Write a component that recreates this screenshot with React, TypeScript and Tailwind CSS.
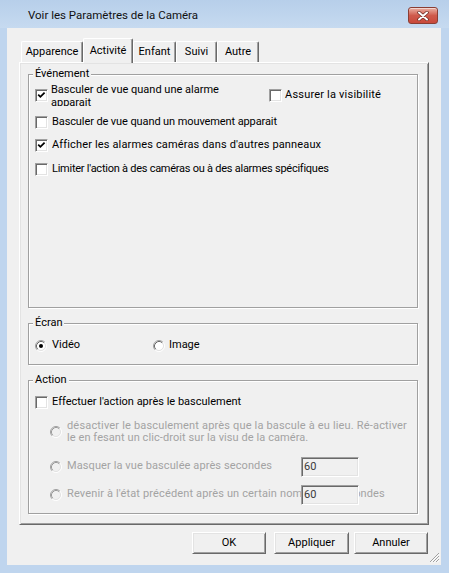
import React from "react";

function Check({ checked }: { checked?: boolean }) {
  return (
    <span className="relative block w-[13px] h-[13px] shrink-0 bg-white border border-t-[#a0a0a0] border-l-[#a0a0a0] border-r-white border-b-white shadow-[inset_1px_1px_0_#696969,inset_-1px_-1px_0_#e3e3e3]">
      {checked && (
        <svg className="absolute left-[1px] top-[1px]" width="9" height="9" viewBox="0 0 9 9">
          <path d="M1.2 3.6 L3.4 5.8 L7.6 1.6" stroke="#000" strokeWidth="1.8" fill="none" />
        </svg>
      )}
    </span>
  );
}

function Radio({ checked, disabled }: { checked?: boolean; disabled?: boolean }) {
  return (
    <svg width="12" height="12" viewBox="0 0 12 12" className="shrink-0 block">
      <path d="M2.11 9.89 A5.5 5.5 0 0 1 9.89 2.11" stroke="#a0a0a0" fill="none" />
      <path d="M9.89 2.11 A5.5 5.5 0 0 1 2.11 9.89" stroke="#ffffff" fill="none" />
      <circle cx="6" cy="6" r="4" fill={disabled ? "#f0f0f0" : "#ffffff"} />
      <path d="M2.82 9.18 A4.5 4.5 0 0 1 9.18 2.82" stroke={disabled ? "#9a9a9a" : "#696969"} fill="none" />
      <path d="M9.18 2.82 A4.5 4.5 0 0 1 2.82 9.18" stroke="#e3e3e3" fill="none" />
      {checked && <circle cx="6" cy="6" r="2" fill="#000" />}
    </svg>
  );
}

function TextBox({ value }: { value: string }) {
  return (
    <div className="relative z-10 w-[58px] h-[20px] shrink-0 bg-[#f0f0f0] border border-t-[#a0a0a0] border-l-[#a0a0a0] border-r-white border-b-white shadow-[inset_1px_1px_0_#696969,inset_-1px_-1px_0_#e3e3e3] flex items-center pl-[2px] text-[#3a3a3a] leading-[14px] tracking-normal">
      {value}
    </div>
  );
}

function Button({ label, w }: { label: string; w: string }) {
  return (
    <div
      className={`${w} h-[22px] bg-[#f0f0f0] border border-t-white border-l-white border-r-[#696969] border-b-[#696969] shadow-[inset_1px_1px_0_#e3e3e3,inset_-1px_-1px_0_#a0a0a0] flex items-center justify-center leading-[14px]`}
    >
      {label}
    </div>
  );
}

function Tab({ label, w, selected }: { label: string; w: string; selected?: boolean }) {
  return (
    <div
      className={`${w} ${
        selected ? "h-[25px] -mb-[1px] relative z-10 pb-[1px]" : "h-[21px]"
      } bg-[#f0f0f0] border-t border-l border-t-white border-l-white border-r border-r-[#696969] shadow-[inset_-1px_0_0_#a0a0a0] rounded-t-[2px] flex items-center justify-center leading-[14px]`}
    >
      {label}
    </div>
  );
}

const groupCls =
  "border border-[#a0a0a0] shadow-[1px_1px_0_#ffffff,inset_1px_1px_0_#ffffff] p-0 m-0 min-w-0";
const legendCls = "ml-[4px] px-[2px] leading-[14px] bg-[#f0f0f0]";

export default function App() {
  return (
    <div className="font-['Roboto',sans-serif] text-[11px] text-black w-[449px] h-[573px] bg-[#bfd5ee] flex flex-col overflow-hidden">
      {/* Title bar */}
      <div className="h-[28px] shrink-0 flex items-start bg-gradient-to-b from-[#b7cfea] to-[#c6daf0]">
        <span className="ml-[28px] mt-[6px] leading-[18px] text-[11.5px] text-[#111]">
          Voir les Paramètres de la Caméra
        </span>
        <div className="ml-auto mr-[11px] mt-[7px] w-[30px] h-[17px] rounded-[3px] border border-[#8a3e34] bg-gradient-to-b from-[#e8b0a4] via-[#cf5a4c] to-[#c9493b] shadow-[inset_0_1px_0_rgba(255,255,255,0.5)] flex items-center justify-center">
          <svg width="14" height="10" viewBox="0 0 14 10">
            <path d="M3 1.5 L11 8.5 M11 1.5 L3 8.5" stroke="#6a2a22" strokeWidth="3.4" strokeLinecap="round" fill="none" />
            <path d="M3 1.5 L11 8.5 M11 1.5 L3 8.5" stroke="#ffffff" strokeWidth="2" strokeLinecap="round" fill="none" />
          </svg>
        </div>
      </div>

      {/* Client area */}
      <div className="relative ml-[7px] mr-[8px] h-[537px] shrink-0 bg-[#f0f0f0] flex flex-col pl-[12px] pt-[10px]">
        {/* Tabs */}
        <div className="h-[24px] flex items-end ml-[2px]">
          <Tab label="Apparence" w="w-[62px]" />
          <Tab label="Activité" w="w-[50px]" selected />
          <Tab label="Enfant" w="w-[43px]" />
          <Tab label="Suivi" w="w-[41px]" />
          <Tab label="Autre" w="w-[42px]" />
        </div>

        {/* Panel */}
        <div className="w-[410px] h-[463px] border border-t-white border-l-white border-r-[#696969] border-b-[#696969] shadow-[inset_1px_1px_0_#e3e3e3,inset_-1px_-1px_0_#a0a0a0] pl-[8px] pt-[4px] flex flex-col">
          {/* Événement */}
          <fieldset className={`${groupCls} w-[390px] h-[241px]`}>
            <legend className={legendCls}>Événement</legend>
            <div className="flex flex-col pl-[6px]">
              <div className="mt-[4px] h-[21px] flex items-center overflow-hidden">
                <div className="w-[234px] flex items-center">
                  <Check checked />
                  <span className="ml-[3px] leading-[13px] whitespace-nowrap">
                    Basculer de vue quand une alarme
                    <br />
                    apparait
                  </span>
                </div>
                <Check />
                <span className="ml-[3px] tracking-[0.2px] whitespace-nowrap">Assurer la visibilité</span>
              </div>
              <div className="mt-[6px] h-[21px] flex items-center">
                <Check />
                <span className="ml-[4px] tracking-[-0.1px] whitespace-nowrap">Basculer de vue quand un mouvement apparait</span>
              </div>
              <div className="mt-[2px] h-[21px] flex items-center">
                <Check checked />
                <span className="ml-[4px] tracking-[0.15px] whitespace-nowrap">
                  Afficher les alarmes caméras dans d'autres panneaux
                </span>
              </div>
              <div className="mt-[3px] h-[21px] flex items-center">
                <Check />
                <span className="ml-[4px] tracking-[-0.25px] whitespace-nowrap">
                  Limiter l'action à des caméras ou à des alarmes spécifiques
                </span>
              </div>
            </div>
          </fieldset>

          {/* Écran */}
          <fieldset className={`${groupCls} mt-[8px] w-[390px] h-[49px]`}>
            <legend className={legendCls}>Écran</legend>
            <div className="mt-[5px] h-[21px] flex items-center pl-[6px]">
              <div className="w-[118px] flex items-center">
                <Radio checked />
                <span className="ml-[5px]">Vidéo</span>
              </div>
              <Radio />
              <span className="ml-[4px]">Image</span>
            </div>
          </fieldset>

          {/* Action */}
          <fieldset className={`${groupCls} mt-[8px] w-[390px] h-[141px]`}>
            <legend className={legendCls}>Action</legend>
            <div className="flex flex-col">
              <div className="mt-[5px] h-[21px] flex items-center pl-[6px]">
                <Check />
                <span className="ml-[4px] whitespace-nowrap">Effectuer l'action après le basculement</span>
              </div>
              <div className="mt-[7px] flex items-center pl-[21px] text-[#a3a3a3]">
                <Radio disabled />
                <span className="ml-[5px] leading-[12px] whitespace-nowrap">
                  <span className="tracking-[0.17px]">
                    désactiver le basculement après que la bascule à eu lieu. Ré-activer
                  </span>
                  <br />
                  <span className="tracking-[0.08px]">
                    le en fesant un clic-droit sur la visu de la caméra.
                  </span>
                </span>
              </div>
              <div className="mt-[12px] h-[21px] flex items-center pl-[21px] text-[#a3a3a3]">
                <div className="w-[251px] flex items-center whitespace-nowrap">
                  <Radio disabled />
                  <span className="ml-[5px] tracking-[0.1px]">Masquer la vue basculée après secondes</span>
                </div>
                <TextBox value="60" />
              </div>
              <div className="mt-[7px] h-[21px] flex items-center pl-[21px] text-[#a3a3a3]">
                <div className="w-[251px] flex items-center whitespace-nowrap">
                  <Radio disabled />
                  <span className="ml-[5px] tracking-[0.14px]">
                    Revenir à l'état précédent après un certain nombre de secondes
                  </span>
                </div>
                <TextBox value="60" />
              </div>
            </div>
          </fieldset>
        </div>

        {/* Buttons */}
        <div className="mt-[7px] flex items-center pl-[173px]">
          <Button label="OK" w="w-[74px]" />
          <div className="w-[8px]" />
          <Button label="Appliquer" w="w-[75px]" />
          <div className="w-[5px]" />
          <Button label="Annuler" w="w-[74px]" />
        </div>

        {/* Resize grip */}
        <svg className="absolute right-[1px] bottom-[2px]" width="11" height="11" viewBox="0 0 11 11">
          <path d="M10 1 L1 10 M10 4 L4 10 M10 7 L7 10" stroke="#a0a0a0" fill="none" />
          <path d="M10.5 2 L2 10.5 M10.5 5 L5 10.5 M10.5 8 L8 10.5" stroke="#ffffff" fill="none" />
        </svg>
      </div>
    </div>
  );
}
